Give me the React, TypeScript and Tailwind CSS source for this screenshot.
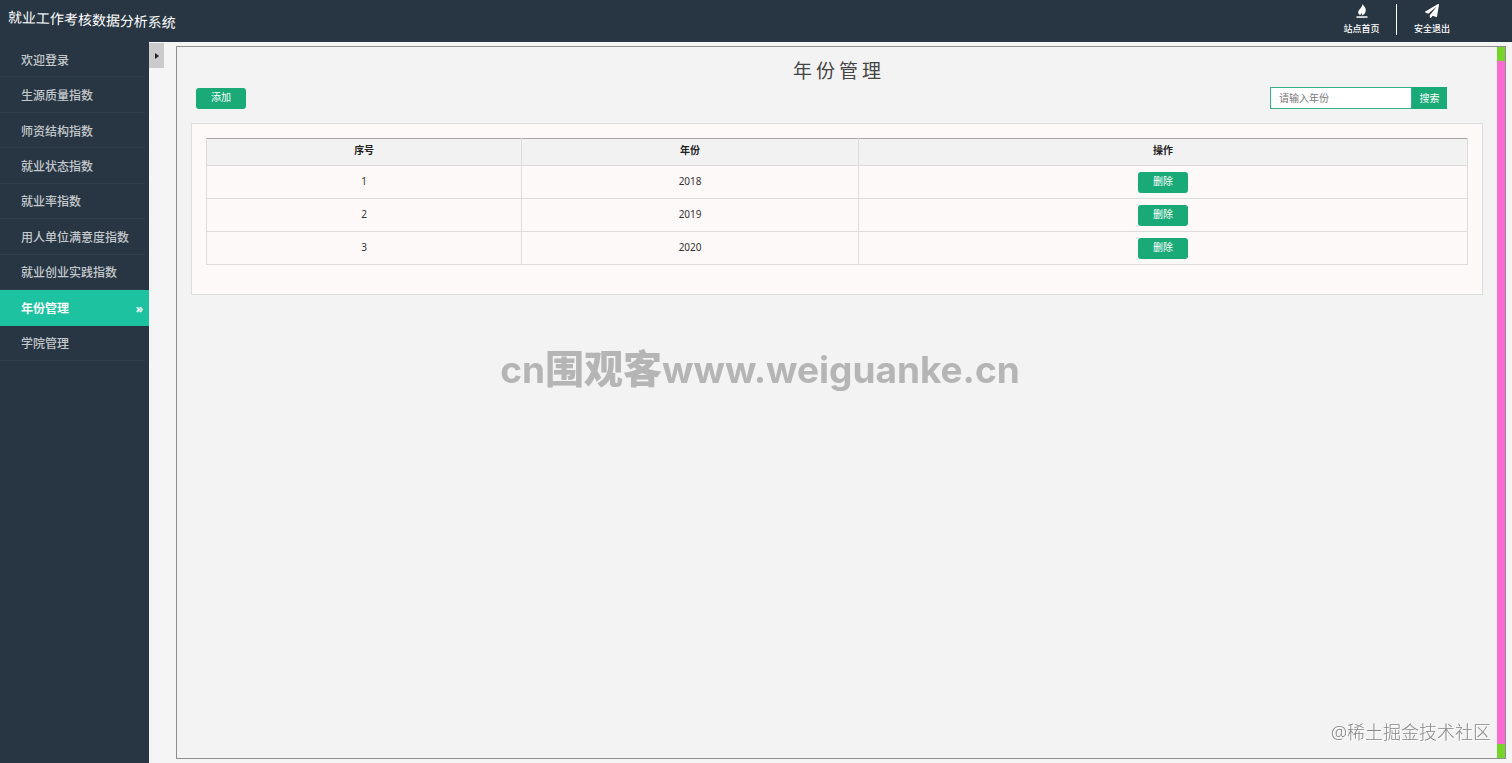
import React, { useState } from 'react';
import { FaPaperPlane } from 'react-icons/fa';

const menuItems = [
  '欢迎登录',
  '生源质量指数',
  '师资结构指数',
  '就业状态指数',
  '就业率指数',
  '用人单位满意度指数',
  '就业创业实践指数',
  '年份管理',
  '学院管理',
];

const FireIcon = () => (
  <svg viewBox="0 0 14 14" className="h-3.5 w-3.5" fill="currentColor" aria-hidden="true">
    <path d="M7.600 0C8 1.600 10.800 3 10.800 6c0 2.700-1.500 4.500-4.200 5.600 0.700-1 0.600-1.800 0.100-2.800-0.300 1-0.700 1.500-1.600 2.200C3.700 10.300 3.100 9.300 3.200 8c0.100-1.600 1.400-2.400 2.300-3.700C6.400 3.100 7.200 2 7.600 0z" />
    <rect x="1.500" y="12.300" width="11" height="1.500" />
  </svg>
);

const Header = () => (
  <header className="flex h-[42px] shrink-0 items-start justify-between bg-[#283643] text-white">
    <h1 className="rotate-2 pt-2.5 pl-2 text-[14px] leading-5">就业工作考核数据分析系统</h1>
    <nav className="flex pt-1 pr-[45px] text-[9px] leading-3 font-medium">
      <a href="#home" className="flex h-[31px] w-[70px] flex-col items-center justify-between border-r border-white">
        <FireIcon />
        站点首页
      </a>
      <a href="#logout" className="flex h-[31px] w-[70px] flex-col items-center justify-between">
        <FaPaperPlane className="h-3.5 w-3.5" />
        安全退出
      </a>
    </nav>
  </header>
);

const Sidebar = ({ active, onSelect }: { active: string; onSelect: (item: string) => void }) => (
  <aside className="w-[149px] shrink-0 bg-[#283643]">
    <ul className="flex h-[319px] flex-col text-[12px] font-medium">
      {menuItems.map((item) => (
        <li key={item} className="flex flex-1">
          <a
            href="#menu"
            onClick={() => onSelect(item)}
            className={
              item === active
                ? 'flex flex-1 items-center justify-between bg-[#1dc3a0] pt-0.5 pr-1.5 pl-[21px] font-bold text-white'
                : 'mr-1 flex flex-1 items-center border-b border-[#303f4c] pt-[3px] pl-[21px] text-[#c3c8cc]'
            }
          >
            {item}
            {item === active && <span className="leading-4">»</span>}
          </a>
        </li>
      ))}
    </ul>
  </aside>
);

const YearTable = ({ years, onDelete }: { years: number[]; onDelete: (year: number) => void }) => (
  <div className="mt-[14px] border border-[#dedddd] bg-[#fdf9f8] px-[14px] pt-[14px] pb-[29px]">
    <table className="w-full table-fixed border-collapse text-center text-[10px] leading-4 text-[#333]">
      <thead>
        <tr className="h-[27px] border-t border-[#a5a5a5] bg-[#f2f2f2] text-[#222]">
          <th className="w-[25%] border-x border-b border-x-[#dcdcdc] border-b-[#dcdcdc] pb-1 font-bold">序号</th>
          <th className="w-[26.7%] border-x border-b border-x-[#dcdcdc] border-b-[#dcdcdc] pb-1 font-bold">年份</th>
          <th className="border-x border-b border-x-[#dcdcdc] border-b-[#dcdcdc] pb-1 font-bold">操作</th>
        </tr>
      </thead>
      <tbody>
        {years.map((year, index) => (
          <tr key={year} className="h-[33px]">
            <td className="border border-[#dcdcdc] pb-0.5">{index + 1}</td>
            <td className="border border-[#dcdcdc] pb-0.5">{year}</td>
            <td className="border border-[#dcdcdc]">
              <button
                type="button"
                onClick={() => onDelete(year)}
                className="mx-auto block h-[21px] w-[50px] rounded-[3px] bg-[#19aa78] pb-0.5 text-white"
              >
                删除
              </button>
            </td>
          </tr>
        ))}
      </tbody>
    </table>
  </div>
);

const App = () => {
  const [active, setActive] = useState('年份管理');
  const [years, setYears] = useState([2018, 2019, 2020]);
  const [keyword, setKeyword] = useState('');

  const handleDelete = (year: number) => {
    setYears(years.filter((y) => y !== year));
  };

  return (
    <div className="flex min-h-screen flex-col bg-[#f5f5f5] font-['Noto_Sans','Noto_Sans_CJK_SC',sans-serif]">
      <Header />
      <div className="flex flex-1">
        <Sidebar active={active} onSelect={setActive} />
        <button
          type="button"
          aria-label="收起菜单"
          className="mt-px flex h-[25px] w-[15px] shrink-0 items-center justify-center bg-[#cbcbcb]"
        >
          <svg viewBox="0 0 4 6" className="h-1.5 w-1 fill-[#222]">
            <path d="M0 0l4 3-4 3z" />
          </svg>
        </button>

        <main className="mt-1 mr-1.5 mb-1 ml-3 flex flex-1 border border-[#8d8d8d] bg-[#f3f3f3]">
          <div className="min-w-0 flex-1 px-[14px] pt-2.5">
            <h2 className="pl-1 text-center text-[19px] leading-7 tracking-[4px] text-[#444]">年份管理</h2>
            <div className="mt-0.5 flex items-center justify-between pr-9 pl-[5px] text-[10px] leading-4">
              <button type="button" className="h-[21px] w-[50px] rounded-[3px] bg-[#19aa78] pb-0.5 text-white">
                添加
              </button>
              <form className="flex h-[22px]" onSubmit={(e) => e.preventDefault()}>
                <input
                  type="text"
                  aria-label="请输入年份"
                  placeholder="请输入年份"
                  value={keyword}
                  onChange={(e) => setKeyword(e.target.value)}
                  className="w-[142px] border border-[#35af87] bg-white px-2 outline-none placeholder:text-[#777]"
                />
                <button type="submit" className="w-[35px] bg-[#19aa78] text-white">
                  搜索
                </button>
              </form>
            </div>
            <YearTable years={years} onDelete={handleDelete} />
          </div>
          <div className="flex w-2 shrink-0 flex-col bg-[#78d32d] py-[14px]">
            <div className="flex-1 bg-[#ff69d2]" />
          </div>
        </main>
      </div>

      {/* watermarks */}
      <div className="pointer-events-none fixed inset-x-0 top-[345px] pl-2 text-center font-['Inter','Noto_Sans_CJK_SC',sans-serif] text-[37px] leading-[48px] font-bold text-[#b5b5b5]">
        cn<span className="text-[39px] font-black">围观客</span>www.weiguanke.cn
      </div>
      <div className="pointer-events-none fixed right-[21px] bottom-[18px] text-[18px] leading-[26px] font-light text-[#858585] [text-shadow:1px_1px_0_#fff]">
        @稀土掘金技术社区
      </div>
    </div>
  );
};

export default App;
